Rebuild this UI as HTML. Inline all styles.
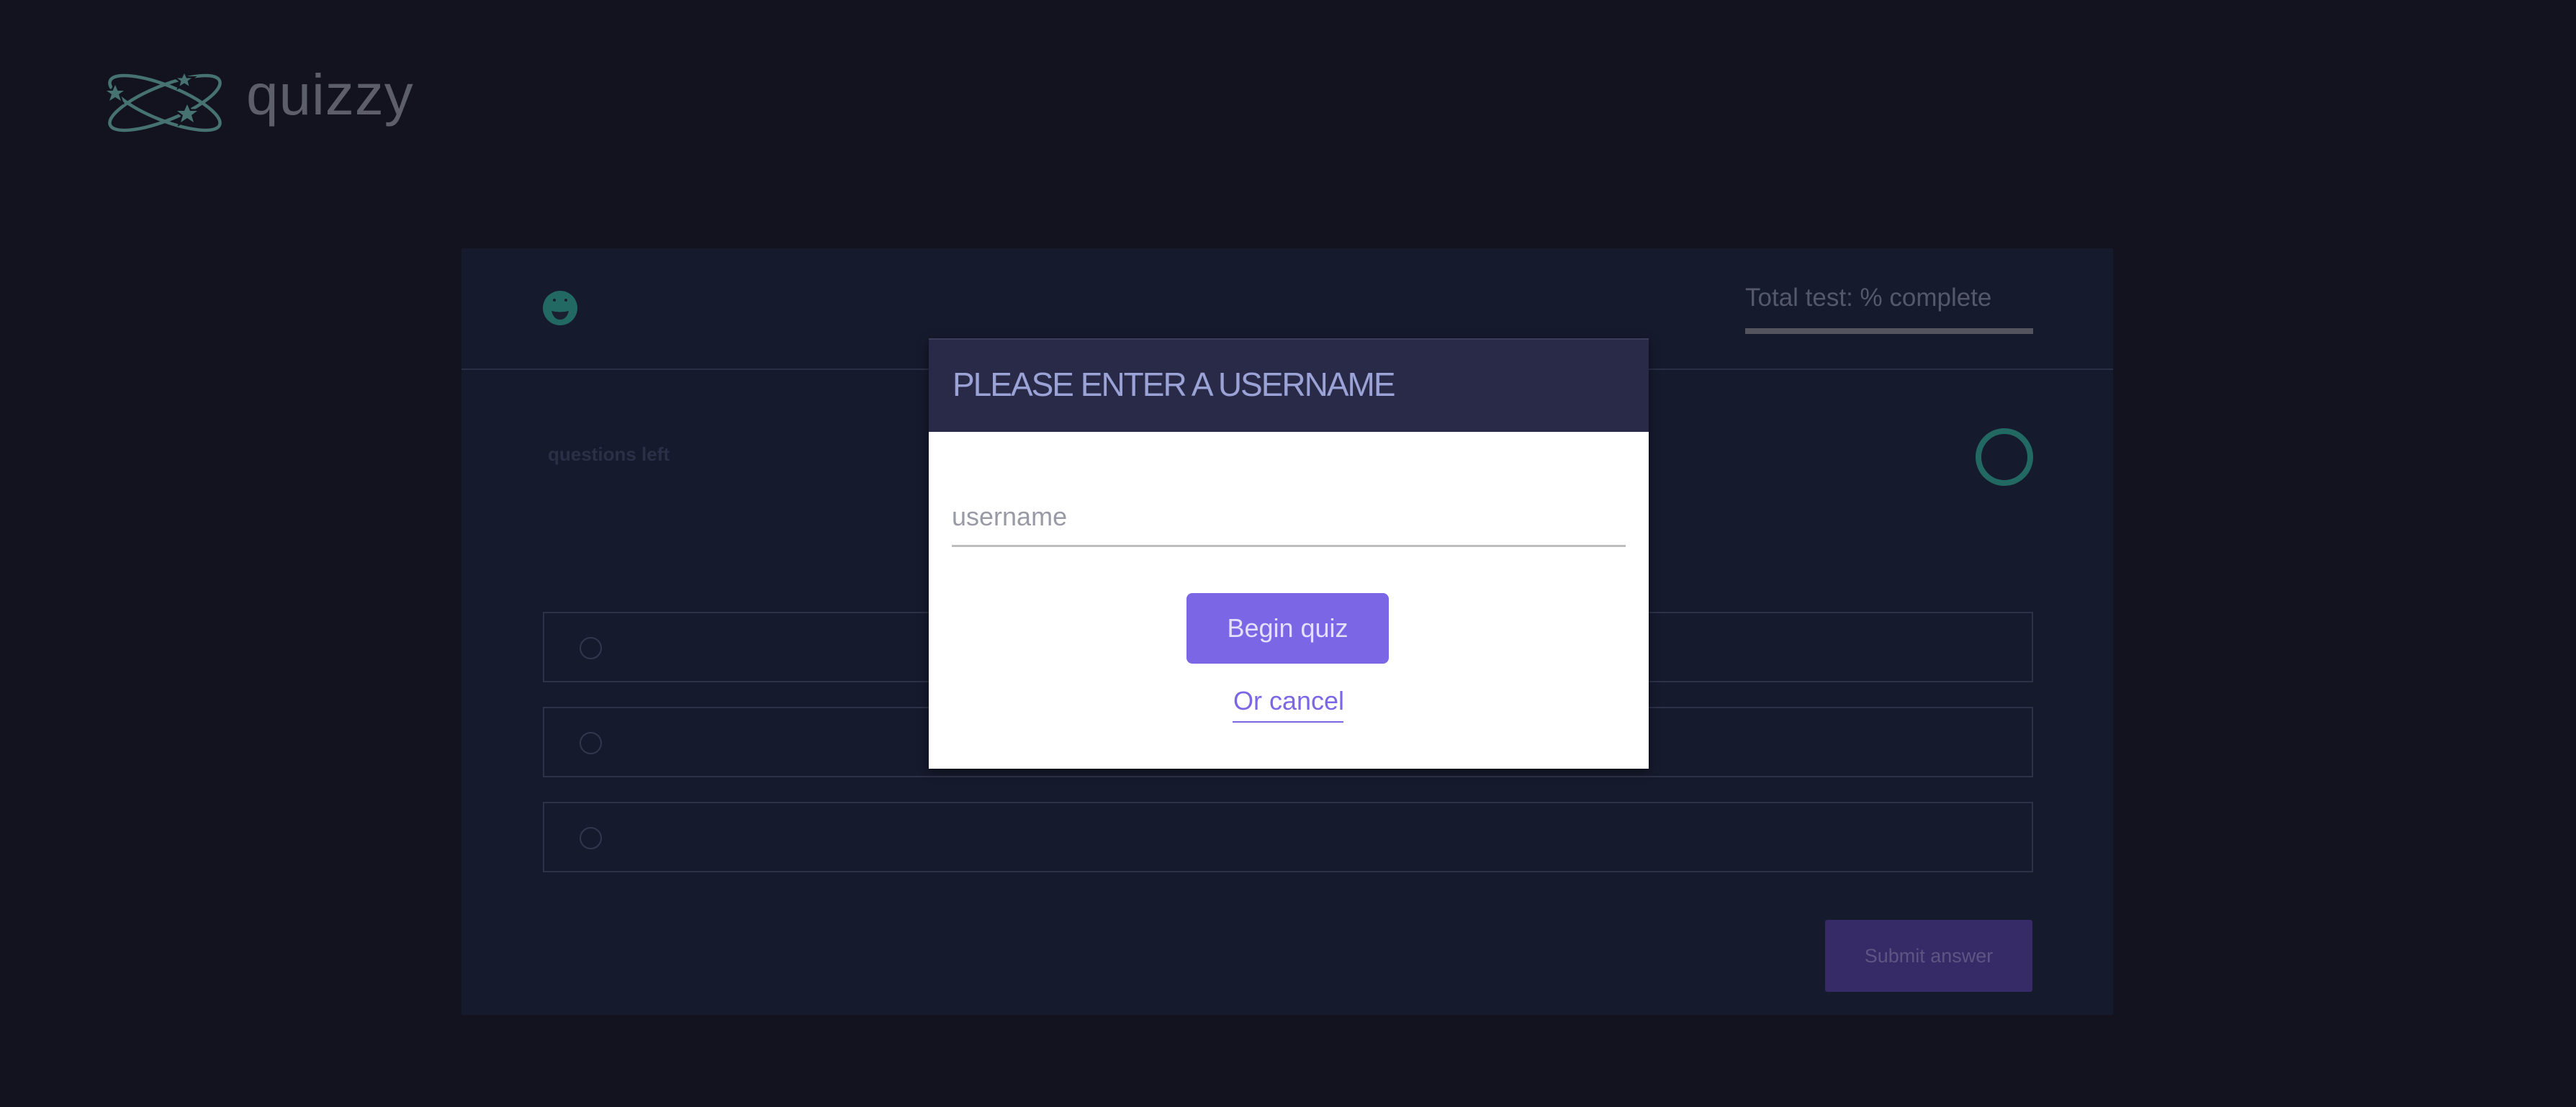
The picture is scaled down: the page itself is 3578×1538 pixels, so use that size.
<!DOCTYPE html>
<html><head><meta charset="utf-8"><style>
*{margin:0;padding:0;box-sizing:border-box}
body{width:3578px;height:1538px;background:#12131f;position:relative;overflow:hidden;font-family:"Liberation Sans",sans-serif}
.abs{position:absolute}
</style></head><body>
<!-- logo -->
<svg class="abs" style="left:140px;top:90px" width="180" height="105" viewBox="0 0 180 105">
<g fill="none" stroke="#467371" stroke-width="4.5" stroke-linecap="round">
<ellipse cx="89" cy="53" rx="82" ry="24" transform="rotate(22 89 53)"/>
<ellipse cx="89" cy="53" rx="82" ry="24" transform="rotate(-22 89 53)"/>
</g>
<g fill="#467371" stroke="#12131f" stroke-width="5" paint-order="stroke">
<polygon points="20,28 23.5,36 32,36 25,41 28,50 20,45 12,50 15,41 8,36 16.5,36"/>
<polygon points="116,12 119,18.5 126,18.5 120.5,22.5 122.5,29.5 116,25.5 109.5,29.5 111.5,22.5 106,18.5 113,18.5"/>
<polygon points="120,55 124,64 134,64 126,70 129,80 120,74 111,80 114,70 106,64 116,64"/>
</g>
</svg>
<div class="abs" style="left:342px;top:82px;font-size:80px;color:#5c5e6a;letter-spacing:1px;line-height:100px">quizzy</div>

<!-- card -->
<div class="abs" style="left:641px;top:345px;width:2294px;height:1065px;background:#161a2d"></div>
<div class="abs" style="left:641px;top:512px;width:2294px;height:2px;background:#2b2e44"></div>
<svg class="abs" style="left:754px;top:404px" width="48" height="48" viewBox="0 0 48 48">
<circle cx="24" cy="24" r="24" fill="#236963"/>
<circle cx="16" cy="13" r="2" fill="#1a2030"/><circle cx="32" cy="13" r="2" fill="#1a2030"/>
<path d="M12 28 Q24 31 36 28 Q33 40 24 40 Q15 40 12 28Z" fill="#1a2030"/>
</svg>
<div class="abs" style="left:2424px;top:394px;font-size:35px;color:#55586a;line-height:40px">Total test: % complete</div>
<div class="abs" style="left:2424px;top:456px;width:400px;height:8px;background:#54545e"></div>
<div class="abs" style="left:761px;top:614px;font-size:26px;font-weight:bold;color:#2c2f45;line-height:34px">questions left</div>
<div class="abs" style="left:2744px;top:595px;width:80px;height:80px;border:8px solid #236963;border-radius:50%"></div>

<div class="abs" style="left:754px;top:850px;width:2070px;height:98px;border:2px solid #2e3147"></div>
<div class="abs" style="left:754px;top:982px;width:2070px;height:98px;border:2px solid #2e3147"></div>
<div class="abs" style="left:754px;top:1114px;width:2070px;height:98px;border:2px solid #2e3147"></div>
<div class="abs" style="left:805px;top:885px;width:31px;height:31px;border:2px solid #33364d;border-radius:50%"></div>
<div class="abs" style="left:805px;top:1017px;width:31px;height:31px;border:2px solid #33364d;border-radius:50%"></div>
<div class="abs" style="left:805px;top:1149px;width:31px;height:31px;border:2px solid #33364d;border-radius:50%"></div>

<div class="abs" style="left:2535px;top:1278px;width:288px;height:100px;background:#372b67;border-radius:3px;color:#5d5583;font-size:27px;text-align:center;line-height:100px">Submit answer</div>

<!-- modal -->
<div class="abs" style="left:1290px;top:470px;width:1000px;height:598px;background:#fff;box-shadow:0 4px 12px rgba(0,0,0,.5)"></div>
<div class="abs" style="left:1290px;top:470px;width:1000px;height:130px;background:#282a48;border-top:2px solid #3b3d5a"></div>
<div class="abs" style="left:1323px;top:508px;font-size:46px;color:#9aa2d6;letter-spacing:-2px;line-height:52px;white-space:nowrap">PLEASE ENTER A USERNAME</div>
<div class="abs" style="left:1322px;top:696px;font-size:36px;color:#999aa6;line-height:44px">username</div>
<div class="abs" style="left:1322px;top:757px;width:936px;height:3px;background:#bdbdbd"></div>
<div class="abs" style="left:1648px;top:824px;width:281px;height:98px;background:#7b66e6;border-radius:8px;color:#e4e0fb;font-size:36px;text-align:center;line-height:98px">Begin quiz</div>
<div class="abs" style="left:1690px;top:952px;width:200px;text-align:center;font-size:36px;color:#7b66e6;line-height:44px">Or cancel</div>
<div class="abs" style="left:1712px;top:1002px;width:154px;height:2px;background:#7b66e6"></div>
</body></html>
